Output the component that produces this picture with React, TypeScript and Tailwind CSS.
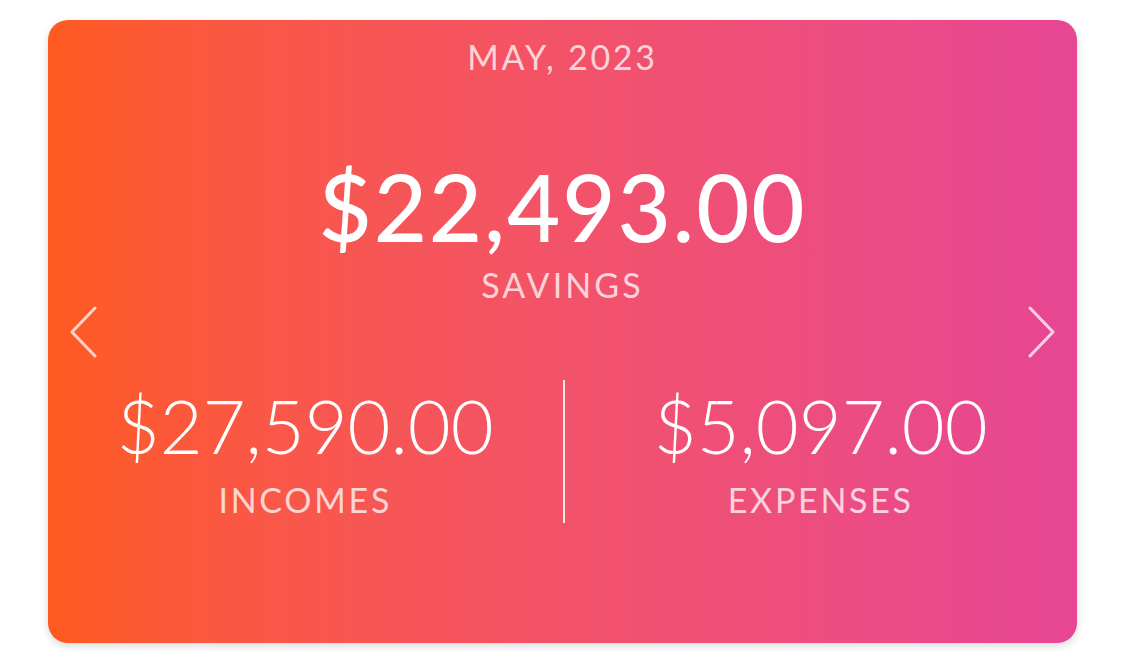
import React from 'react';

const Chevron = ({ dir }: { dir: 'left' | 'right' }) => (
  <svg width="30" height="52" viewBox="0 0 30 52" fill="none" stroke="currentColor" strokeWidth="3" strokeLinecap="round" strokeLinejoin="round">
    {dir === 'left' ? <path d="M26 2 L3 26 L26 50" /> : <path d="M4 2 L27 26 L4 50" />}
  </svg>
);

const Stat = ({ value, label, divider }: { value: string; label: string; divider?: boolean }) => (
  <div className={`flex flex-col items-center h-[143px] pt-[9px] ${divider ? 'border-l-2 border-white/85' : ''}`}>
    <p className="text-[74px] leading-none font-light text-white">{value}</p>
    <p className="mt-[20px] text-[34px] leading-none tracking-[0.08em] text-white/75">{label}</p>
  </div>
);

export default function App() {
  return (
    <div className="min-h-screen bg-white px-12 pt-5" style={{ fontFamily: "Lato, 'Liberation Sans', sans-serif" }}>
      <div className="relative h-[623px] rounded-[20px] bg-linear-to-r from-[#ff5a1f] to-[#e74694] shadow-[0_3px_8px_rgba(0,0,0,0.15)] text-center">
        <p className="pt-[20px] text-[34px] leading-none tracking-[0.08em] text-white/75">MAY, 2023</p>

        <p className="mt-[87px] text-[92px] leading-none font-medium tracking-[0.02em] text-white">$22,493.00</p>
        <p className="mt-[15px] text-[34px] leading-none tracking-[0.09em] text-white/75">SAVINGS</p>

        <div className="grid grid-cols-2 mt-[78px]">
          <Stat value="$27,590.00" label="INCOMES" />
          <Stat value="$5,097.00" label="EXPENSES" divider />
        </div>

        <button className="absolute left-[21px] top-1/2 -translate-y-1/2 text-white/75">
          <Chevron dir="left" />
        </button>
        <button className="absolute right-[21px] top-1/2 -translate-y-1/2 text-white/75">
          <Chevron dir="right" />
        </button>
      </div>
    </div>
  );
}
